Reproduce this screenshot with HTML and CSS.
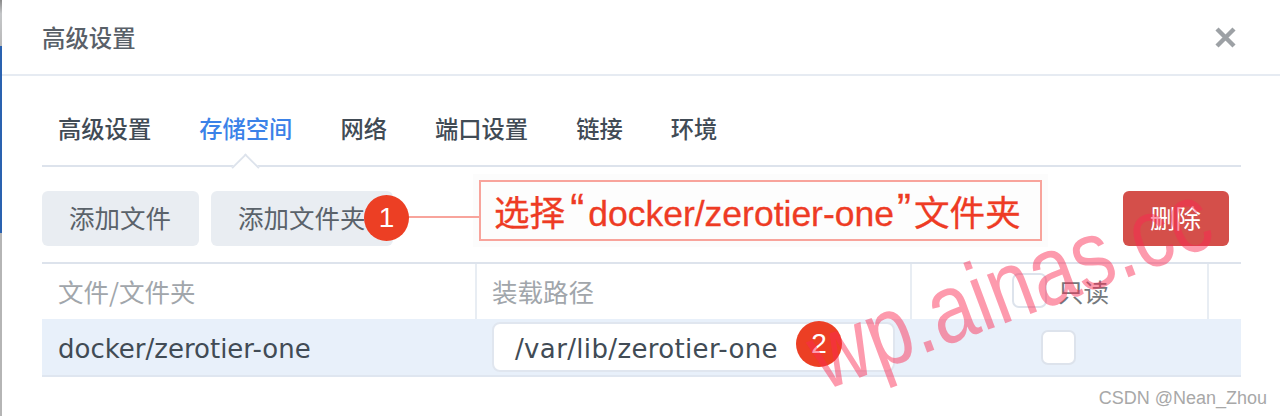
FILE: index.html
```html
<!DOCTYPE html>
<html lang="zh">
<head>
<meta charset="utf-8">
<title>高级设置</title>
<link rel="stylesheet" href="styles.css">
</head>
<body>
<div class="strip"><i class="s1"></i><i class="s2"></i><i class="s3"></i></div>
<main class="dialog">
  <header class="head">
    <h1>高级设置</h1>
    <svg class="close" viewBox="0 0 21 21" width="21" height="21"><path d="M2 2 19 19M19 2 2 19" stroke="#9da1a5" stroke-width="4.4" fill="none"/></svg>
  </header>
  <nav class="tabs">
    <span>高级设置</span><span class="on">存储空间</span><span>网络</span><span>端口设置</span><span>链接</span><span>环境</span>
  </nav>
  <div class="tools">
    <button class="btn">添加文件</button>
    <button class="btn">添加文件夹</button>
    <button class="btn del">删除</button>
  </div>
  <div class="table">
    <div class="row th">
      <div class="c1">文件/文件夹</div>
      <div class="c2">装载路径</div>
      <div class="c3"><span class="box small"></span>只读</div>
      <div class="c4"></div>
    </div>
    <div class="row td">
      <div class="c1">docker/zerotier-one</div>
      <div class="c2"><div class="input">/var/lib/zerotier-one</div></div>
      <div class="c3 mid"><span class="box"></span></div>
      <div class="c4"></div>
    </div>
  </div>
</main>
<div class="callout">选择<span class="q open">“</span><span class="lat">docker/zerotier-one</span><span class="q close-q">”</span>文件夹</div>
<div class="leader"></div>
<div class="badge b1">1</div>
<div class="badge b2">2</div>
<div class="mark">wp.ainas.cc</div>
<div class="csdn">CSDN @Nean_Zhou</div>
</body>
</html>
```

FILE: styles.css
```css
* { box-sizing: border-box; }
html, body { margin: 0; height: 416px; overflow: hidden; background: #fff; }
body { position: relative; font-family: "DejaVu Sans", "Noto Sans CJK SC", sans-serif; color: #414b55; }
.strip { position: absolute; left: 0; top: 0; width: 2px; height: 416px; display: flex; flex-direction: column; }
.strip .s1 { height: 46px; background: linear-gradient(#8a8a8a, #c4c6c8 30%, #b9b9b9); }
.strip .s2 { height: 187px; background: #2a62b0; }
.strip .s3 { flex: 1; background: #b5b5b5; }
.dialog { padding-left: 42px; width: 1241px; }
.head { height: 76px; margin-left: -40px; margin-right: -39px; padding: 0 44px 0 40px; border-bottom: 2px solid #e6ebf2; display: flex; align-items: center; justify-content: space-between; }
.head h1 { margin: 0; font-size: 23.4px; font-weight: 500; color: #596068; font-family: "Noto Sans CJK SC", sans-serif; }
.close { display: block; }
.tabs { height: 91px; padding: 0 16px; border-bottom: 2px solid #dde3ec; display: flex; gap: 48px; align-items: center; font-family: "Noto Sans CJK SC", sans-serif; font-size: 23.3px; font-weight: 500; position: relative; }
.tabs span { position: relative; top: 7px; }
.tabs .on { color: #3b82e8; }
.tabs .on::after { content: ""; position: absolute; left: 36px; top: 46px; width: 19px; height: 19px; background: #fff; border: 2px solid #dde3ec; border-right: 0; border-bottom: 0; transform: rotate(45deg) scale(.95); }
.tools { display: flex; gap: 12px; padding-top: 24px; height: 95px; }
.btn { height: 55px; padding: 0 0 4px; background: #e9edf2; border: 0; border-radius: 6px; font: 400 25.5px "Noto Sans CJK SC", sans-serif; color: #5a626a; text-align: left; }
.btn:first-child { width: 157px; padding-left: 27px; }
.btn:nth-child(2) { width: 182px; padding-left: 27px; }
.btn.del { margin-left: auto; margin-right: 12px; width: 106px; padding-left: 27px; background: #d44f4a; color: #fff; }
.table { border-top: 2px solid #dde3ec; border-bottom: 2px solid #dfe6f0; }
.row { display: grid; grid-template-columns: 435px 435px 297px 32px; }
.row > div { display: flex; align-items: center; }
.th { height: 55px; font: 400 25.5px "Noto Sans CJK SC", sans-serif; color: #a1a6ab; }
.th > div { border-right: 2px solid #e8edf3; padding-left: 16px; padding-bottom: 3px; }
.th .c4 { border: 0; }
.td { height: 56px; background: #e8f0fa; font-size: 26px; }
.td > div { padding-left: 16px; }
.td .c1 { padding-top: 3px; }
.th .c2, .td .c2 { padding-left: 15px; }
.th .c3 { padding-left: 100px; color: #75797d; }
.box { display: block; width: 35px; height: 35px; border: 2px solid #dde3ec; border-radius: 7px; background: #fff; }
.box.small { margin-right: 11px; position: relative; top: 0; }
.mid { padding-left: 129px !important; }
.input { width: 403px; height: 50px; background: #fff; border: 2px solid #e0e6ef; border-radius: 8px; padding: 3px 0 0 21px; display: flex; align-items: center; white-space: nowrap; flex: none; letter-spacing: .35px; }
.callout { position: absolute; left: 479px; top: 180px; width: 563px; height: 61px; border: 2px solid #f8a49c; background: #fdfdfd; box-shadow: 0 0 0 6px #fcfcfc; color: #ee3b24; font-size: 35.6px; font-weight: 400; line-height: 57px; padding-left: 13px; white-space: nowrap; font-family: "Noto Sans CJK SC", sans-serif; -webkit-text-stroke: .3px #ee3b24; }
.lat { font-family: "Liberation Sans", sans-serif; font-size: 35.5px; }
.q { display: inline-block; font-family: "Liberation Sans", sans-serif; font-size: 42px; line-height: 54px; vertical-align: top; }
.open { width: 23px; text-align: right; padding-right: 4px; }
.close-q { width: 20px; text-align: left; padding-left: 3px; }
.leader { position: absolute; left: 405px; top: 216px; width: 75px; height: 2px; background: #f8a49c; }
.badge { position: absolute; border-radius: 50%; background: #ec3f24; color: #fff; display: flex; align-items: center; justify-content: center; font: 500 28px "Liberation Sans", sans-serif; }
.b1 { left: 364px; top: 195px; width: 45px; height: 46px; }
.b2 { left: 796px; top: 321px; width: 46px; height: 46px; }
.mark { position: absolute; left: 823.5px; top: 322.7px; font: 400 80.5px/1 "Liberation Sans", sans-serif; color: rgba(250, 40, 80, .47); transform: rotate(-20.5deg) scaleY(1.22); transform-origin: 0 68.1px; white-space: nowrap; }
.csdn { position: absolute; right: 13px; top: 388px; font: 400 18px "Liberation Sans", sans-serif; color: #a8a8a8; }
```
